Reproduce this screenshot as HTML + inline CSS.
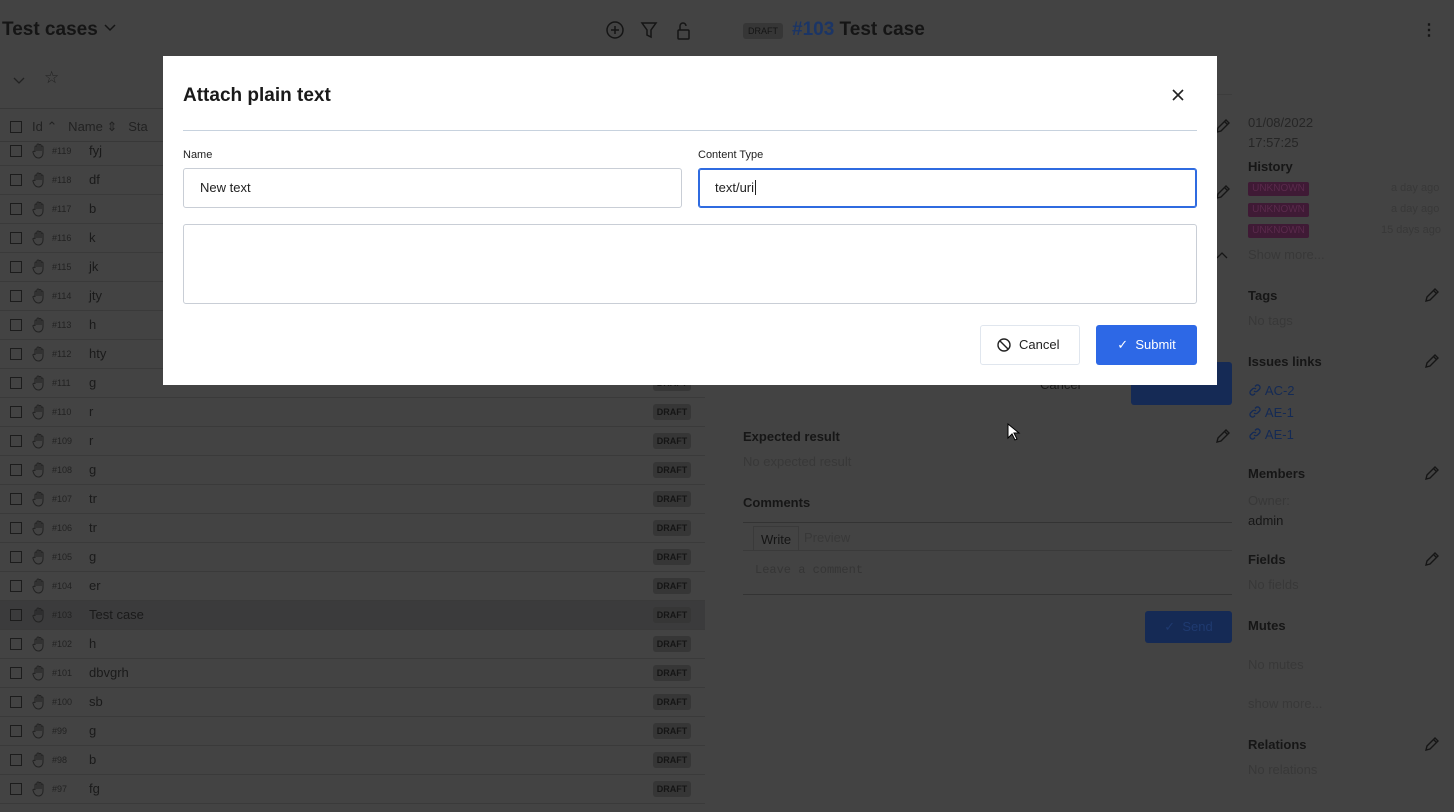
<!DOCTYPE html>
<html><head><meta charset="utf-8"><style>
*{box-sizing:border-box;margin:0;padding:0}
body{width:1454px;height:812px;overflow:hidden;background:#434343;font-family:"Liberation Sans",sans-serif;position:relative;color:#151515}
.a{position:absolute;white-space:nowrap}
.row{position:absolute;left:0;width:705px;height:29px;border-bottom:1px solid #3a3a3a}
.cb{position:absolute;left:10px;top:8px;width:12px;height:12px;border:1.5px solid #1c1c1c}
.id{position:absolute;left:52px;top:9px;font-size:9px;color:#222}
.nm{position:absolute;left:89px;top:6px;font-size:13px;color:#1a1a1a}
.dr{position:absolute;left:653px;top:6px;width:38px;height:16px;background:#363636;border-radius:3px;font-size:9px;font-weight:bold;color:#151515;text-align:center;line-height:16px}
.hd{position:absolute;left:32px;top:6px;width:14px;height:16px}
.side{font-size:13px;color:#161616;font-weight:bold}
.mut{font-size:13px;color:#383838}
.unk{position:absolute;left:1248px;width:61px;height:14px;background:#3f1a35;color:#5a2a4c;font-size:10px;line-height:14px;text-align:center;border-radius:2px}
.modal{position:absolute;left:163px;top:56px;width:1054px;height:329px;background:#fff}
.inp{position:absolute;height:40px;border:1px solid #c9ced6;border-radius:3px;font-size:13px;color:#222;padding-left:16px;line-height:38px}
.pen{position:absolute;width:16px;height:16px}
</style></head><body>
<svg width="0" height="0" style="position:absolute"><defs>
<symbol id="h" viewBox="0 0 14 16"><path d="M3 9V4a1 1 0 0 1 2 0v4M5 7V2a1 1 0 0 1 2 0v6M7 7V2.5a1 1 0 0 1 2 0V8M9 7V4a1 1 0 0 1 2 0v6c0 3-2 5-4.5 5S3 13.5 2 12L1 9.5a1 1 0 0 1 2-.5" fill="none" stroke="#222" stroke-width="1"/></symbol>
<symbol id="p" viewBox="0 0 16 16"><path d="M11 2l3 3-8 8-4 1 1-4z M9.5 3.5l3 3" fill="none" stroke="#161616" stroke-width="1.4"/></symbol>
<symbol id="l" viewBox="0 0 14 14"><path d="M6 8a2.5 2.5 0 0 0 3.5 0l2-2a2.5 2.5 0 0 0-3.5-3.5l-1 1M8 6a2.5 2.5 0 0 0-3.5 0l-2 2A2.5 2.5 0 0 0 6 11.5l1-1" fill="none" stroke="#142a55" stroke-width="1.4"/></symbol>
</defs></svg>
<div class="a" style="left:2px;top:19px;font-size:19px;font-weight:bold;color:#151515">Test cases <svg width="14" height="10" style="vertical-align:2px" fill="none" stroke="#151515" stroke-width="1.5"><path d="M2 2l5 5 5-5"/></svg></div>
<svg class="a" style="left:605px;top:20px" width="90" height="22" fill="none" stroke="#151515" stroke-width="1.5"><circle cx="10" cy="10" r="8"/><path d="M10 6v8M6 10h8"/><path d="M37 3h14l-5 7v7l-4-2v-5z"/><rect x="73" y="10" width="11" height="9" rx="1"/><path d="M75 10V6a3 3 0 0 1 6 0"/></svg>
<svg class="a" style="left:12px;top:76px" width="14" height="10" fill="none" stroke="#222" stroke-width="1.3"><path d="M2 2l5 5 5-5"/></svg>
<div class="a" style="left:44px;top:68px;font-size:17px;color:#222">&#9734;</div>
<div class="a" style="left:0;top:108px;width:705px;border-top:1px solid #383838"></div>
<div class="a" style="left:10px;top:121px;width:12px;height:12px;border:1.5px solid #1c1c1c"></div>
<div class="a" style="left:32px;top:119px;font-size:13px;color:#222">Id &#8963;&nbsp;&nbsp; Name &#8661;&nbsp;&nbsp; Sta</div>
<div class="a" style="left:0;top:141px;width:705px;border-top:1px solid #383838"></div>
<div class="row" style="top:137px"><div class="cb"></div><svg class="hd"><use href="#h"/></svg><div class="id">#119</div><div class="nm">fyj</div></div>
<div class="row" style="top:166px"><div class="cb"></div><svg class="hd"><use href="#h"/></svg><div class="id">#118</div><div class="nm">df</div></div>
<div class="row" style="top:195px"><div class="cb"></div><svg class="hd"><use href="#h"/></svg><div class="id">#117</div><div class="nm">b</div></div>
<div class="row" style="top:224px"><div class="cb"></div><svg class="hd"><use href="#h"/></svg><div class="id">#116</div><div class="nm">k</div></div>
<div class="row" style="top:253px"><div class="cb"></div><svg class="hd"><use href="#h"/></svg><div class="id">#115</div><div class="nm">jk</div></div>
<div class="row" style="top:282px"><div class="cb"></div><svg class="hd"><use href="#h"/></svg><div class="id">#114</div><div class="nm">jty</div></div>
<div class="row" style="top:311px"><div class="cb"></div><svg class="hd"><use href="#h"/></svg><div class="id">#113</div><div class="nm">h</div></div>
<div class="row" style="top:340px"><div class="cb"></div><svg class="hd"><use href="#h"/></svg><div class="id">#112</div><div class="nm">hty</div></div>
<div class="row" style="top:369px"><div class="cb"></div><svg class="hd"><use href="#h"/></svg><div class="id">#111</div><div class="nm">g</div><div class="dr">DRAFT</div></div>
<div class="row" style="top:398px"><div class="cb"></div><svg class="hd"><use href="#h"/></svg><div class="id">#110</div><div class="nm">r</div><div class="dr">DRAFT</div></div>
<div class="row" style="top:427px"><div class="cb"></div><svg class="hd"><use href="#h"/></svg><div class="id">#109</div><div class="nm">r</div><div class="dr">DRAFT</div></div>
<div class="row" style="top:456px"><div class="cb"></div><svg class="hd"><use href="#h"/></svg><div class="id">#108</div><div class="nm">g</div><div class="dr">DRAFT</div></div>
<div class="row" style="top:485px"><div class="cb"></div><svg class="hd"><use href="#h"/></svg><div class="id">#107</div><div class="nm">tr</div><div class="dr">DRAFT</div></div>
<div class="row" style="top:514px"><div class="cb"></div><svg class="hd"><use href="#h"/></svg><div class="id">#106</div><div class="nm">tr</div><div class="dr">DRAFT</div></div>
<div class="row" style="top:543px"><div class="cb"></div><svg class="hd"><use href="#h"/></svg><div class="id">#105</div><div class="nm">g</div><div class="dr">DRAFT</div></div>
<div class="row" style="top:572px"><div class="cb"></div><svg class="hd"><use href="#h"/></svg><div class="id">#104</div><div class="nm">er</div><div class="dr">DRAFT</div></div>
<div class="row" style="top:601px;background:#3b3b3c"><div class="cb"></div><svg class="hd"><use href="#h"/></svg><div class="id">#103</div><div class="nm">Test case</div><div class="dr">DRAFT</div></div>
<div class="row" style="top:630px"><div class="cb"></div><svg class="hd"><use href="#h"/></svg><div class="id">#102</div><div class="nm">h</div><div class="dr">DRAFT</div></div>
<div class="row" style="top:659px"><div class="cb"></div><svg class="hd"><use href="#h"/></svg><div class="id">#101</div><div class="nm">dbvgrh</div><div class="dr">DRAFT</div></div>
<div class="row" style="top:688px"><div class="cb"></div><svg class="hd"><use href="#h"/></svg><div class="id">#100</div><div class="nm">sb</div><div class="dr">DRAFT</div></div>
<div class="row" style="top:717px"><div class="cb"></div><svg class="hd"><use href="#h"/></svg><div class="id">#99</div><div class="nm">g</div><div class="dr">DRAFT</div></div>
<div class="row" style="top:746px"><div class="cb"></div><svg class="hd"><use href="#h"/></svg><div class="id">#98</div><div class="nm">b</div><div class="dr">DRAFT</div></div>
<div class="row" style="top:775px"><div class="cb"></div><svg class="hd"><use href="#h"/></svg><div class="id">#97</div><div class="nm">fg</div><div class="dr">DRAFT</div></div>

<div class="a" style="left:743px;top:23px;width:40px;height:16px;background:#363636;border-radius:3px;font-size:9px;color:#151515;text-align:center;line-height:16px">DRAFT</div>
<div class="a" style="left:792px;top:19px;font-size:19px;font-weight:bold"><span style="color:#1b3566">#103</span> Test case</div>
<div class="a" style="left:1421px;top:20px;font-size:16px;font-weight:bold">&#8942;</div>
<div class="a" style="left:705px;top:94px;width:527px;border-top:1px solid #3c3c3c"></div>
<div class="a" style="left:1248px;top:113px;font-size:13px;color:#262626;line-height:20px">01/08/2022<br>17:57:25</div>
<div class="a side" style="left:1248px;top:159px">History</div>
<div class="unk" style="top:182px">UNKNOWN</div><div class="a mut" style="left:1391px;top:182px;font-size:11px">a day ago</div>
<div class="unk" style="top:203px">UNKNOWN</div><div class="a mut" style="left:1391px;top:203px;font-size:11px">a day ago</div>
<div class="unk" style="top:224px">UNKNOWN</div><div class="a mut" style="left:1381px;top:224px;font-size:11px">15 days ago</div>
<div class="a mut" style="left:1248px;top:247px">Show more...</div>
<svg class="a" style="left:1215px;top:250px" width="14" height="10" fill="none" stroke="#161616" stroke-width="1.3"><path d="M2 8l5-5 5 5"/></svg>
<div class="a side" style="left:1248px;top:288px">Tags</div><div class="a mut" style="left:1248px;top:313px">No tags</div>
<div class="a side" style="left:1248px;top:354px">Issues links</div>
<div class="a" style="left:1248px;top:380px;font-size:13px;color:#142a55;line-height:22px"><svg width="14" height="14" style="vertical-align:-2px"><use href="#l"/></svg> AC-2<br><svg width="14" height="14" style="vertical-align:-2px"><use href="#l"/></svg> AE-1<br><svg width="14" height="14" style="vertical-align:-2px"><use href="#l"/></svg> AE-1</div>
<div class="a side" style="left:1248px;top:466px">Members</div>
<div class="a mut" style="left:1248px;top:491px;line-height:20px">Owner:<br><span style="color:#161616">admin</span></div>
<div class="a side" style="left:1248px;top:552px">Fields</div><div class="a mut" style="left:1248px;top:577px">No fields</div>
<div class="a side" style="left:1248px;top:618px">Mutes</div><div class="a mut" style="left:1248px;top:657px">No mutes</div>
<div class="a mut" style="left:1248px;top:696px">show more...</div>
<div class="a side" style="left:1248px;top:737px">Relations</div><div class="a mut" style="left:1248px;top:762px">No relations</div>
<svg class="pen" style="left:1215px;top:118px"><use href="#p"/></svg>
<svg class="pen" style="left:1215px;top:184px"><use href="#p"/></svg>
<svg class="pen" style="left:1424px;top:287px"><use href="#p"/></svg>
<svg class="pen" style="left:1424px;top:353px"><use href="#p"/></svg>
<svg class="pen" style="left:1424px;top:465px"><use href="#p"/></svg>
<svg class="pen" style="left:1424px;top:551px"><use href="#p"/></svg>
<svg class="pen" style="left:1424px;top:736px"><use href="#p"/></svg>
<svg class="pen" style="left:1215px;top:428px"><use href="#p"/></svg>
<div class="a" style="left:1131px;top:362px;width:101px;height:43px;background:#152a55;border-radius:3px"></div>
<div class="a" style="left:1040px;top:377px;font-size:13px;color:#1a1a1a">Cancel</div>
<div class="a side" style="left:743px;top:429px">Expected result</div>
<div class="a mut" style="left:743px;top:454px">No expected result</div>
<div class="a side" style="left:743px;top:495px">Comments</div>
<div class="a" style="left:743px;top:522px;width:489px;height:73px;border-top:1px solid #333;border-bottom:1px solid #333"></div>
<div class="a" style="left:743px;top:550px;width:489px;border-top:1px solid #3a3a3a"></div>
<div class="a" style="left:753px;top:526px;width:46px;height:24px;border:1px solid #3a3a3a;border-bottom:none"></div>
<div class="a" style="left:761px;top:532px;font-size:13px">Write</div>
<div class="a mut" style="left:804px;top:530px">Preview</div>
<div class="a" style="left:755px;top:563px;font-family:'Liberation Mono',monospace;font-size:12px;color:#353535">Leave a comment</div>
<div class="a" style="left:1145px;top:611px;width:87px;height:32px;background:#152a55;border-radius:3px;color:#1f3a70;font-size:13px;line-height:32px;text-align:center">&#10003;&nbsp; Send</div>

<div class="modal">
<div class="a" style="left:20px;top:29px;font-size:19px;font-weight:bold;color:#1a1a1a">Attach plain text</div>
<svg class="a" style="left:1008px;top:32px" width="14" height="14" stroke="#222" stroke-width="1.6"><path d="M2 2l10 10M12 2L2 12"/></svg>
<div class="a" style="left:20px;top:74px;width:1014px;border-top:1px solid #c7d2de"></div>
<div class="a" style="left:20px;top:93px;font-size:11px;color:#222">Name</div>
<div class="a" style="left:535px;top:93px;font-size:11px;color:#222">Content Type</div>
<div class="inp" style="left:20px;top:112px;width:499px">New text</div>
<div class="inp" style="left:535px;top:112px;width:499px;border-color:#2f6be0;box-shadow:0 0 0 1px #2f6be0 inset">text/uri<span style="border-left:1px solid #222;margin-left:1px"></span></div>
<div class="inp" style="left:20px;top:168px;width:1014px;height:80px"></div>
<div class="a" style="left:817px;top:269px;width:100px;height:40px;border:1px solid #e0e6ee;border-radius:3px;font-size:13px;color:#222;line-height:38px;padding-left:16px"><svg style="vertical-align:-3px;margin-right:8px" width="14" height="14" fill="none" stroke="#222" stroke-width="1.4"><circle cx="7" cy="7" r="6"/><path d="M3 3l8 8"/></svg>Cancel</div>
<div class="a" style="left:933px;top:269px;width:101px;height:40px;background:#2d68e6;border-radius:3px;font-size:13px;color:#fff;line-height:40px;text-align:center">&#10003;&nbsp; Submit</div>
</div>
<svg class="a" style="left:1007px;top:423px" width="14" height="20"><path d="M1 1v14l4-4 3 6 2-1-3-6h5z" fill="#fff" stroke="#000"/></svg>
</body></html>
